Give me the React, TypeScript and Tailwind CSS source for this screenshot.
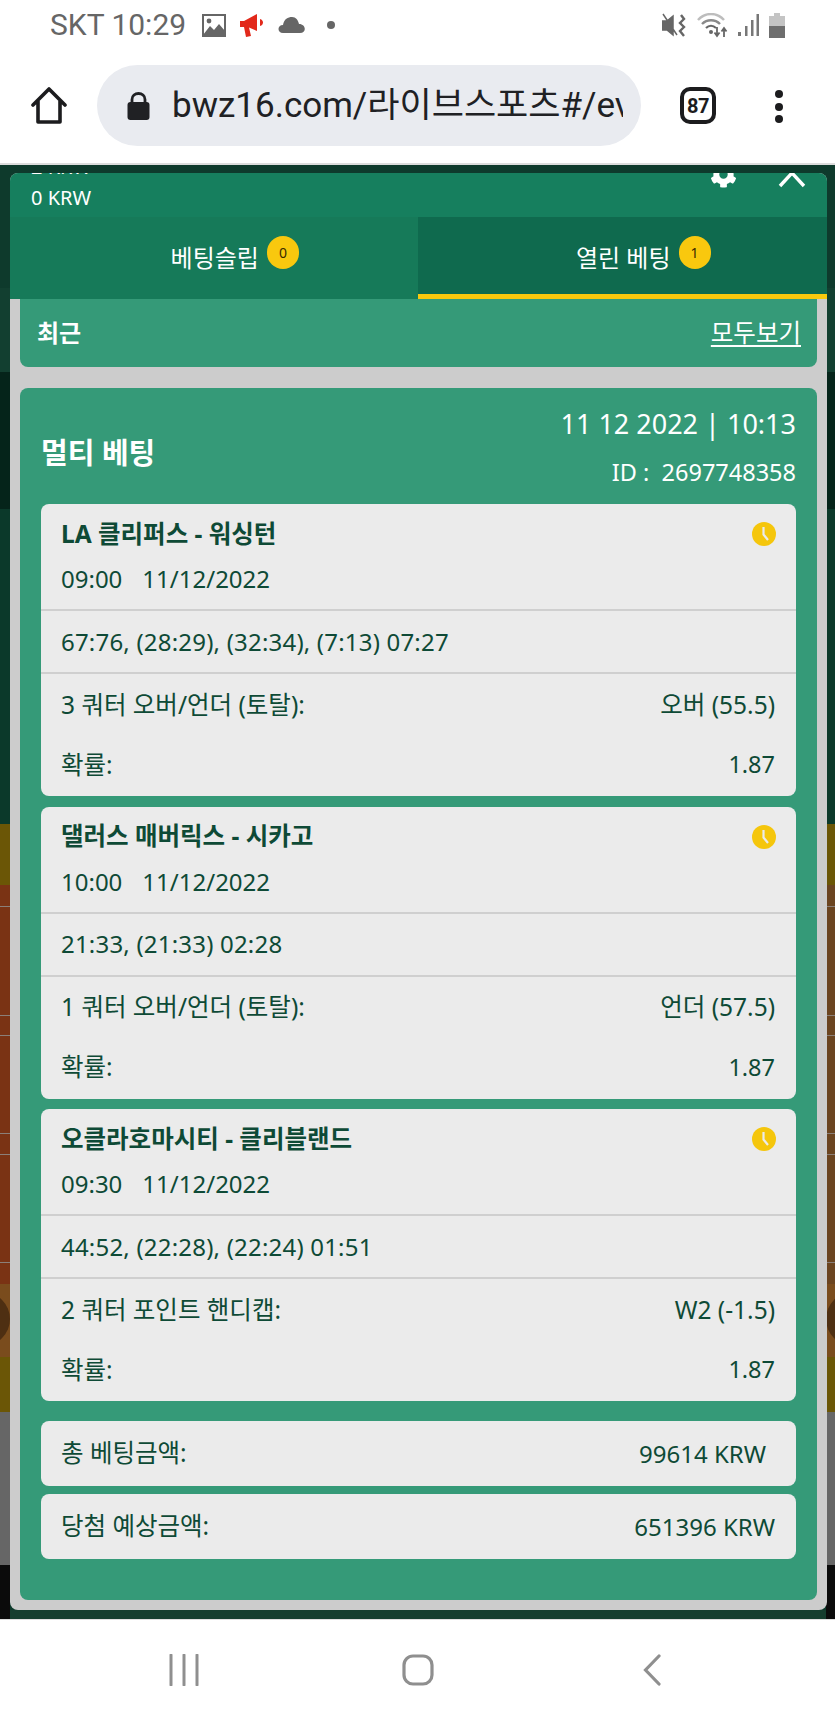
import { FaCog } from 'react-icons/fa';

const bets = [
  {
    teams: 'LA 클리퍼스 - 워싱턴',
    time: '09:00',
    score: '67:76, (28:29), (32:34), (7:13) 07:27',
    market: '3 쿼터 오버/언더 (토탈):',
    pick: '오버 (55.5)'
  },
  {
    teams: '댈러스 매버릭스 - 시카고',
    time: '10:00',
    score: '21:33, (21:33) 02:28',
    market: '1 쿼터 오버/언더 (토탈):',
    pick: '언더 (57.5)'
  },
  {
    teams: '오클라호마시티 - 클리블랜드',
    time: '09:30',
    score: '44:52, (22:28), (22:24) 01:51',
    market: '2 쿼터 포인트 핸디캡:',
    pick: 'W2 (-1.5)'
  }
];

const StatusBar = () => (
  <div className="flex h-[50px] items-center pl-[50px] pr-[50px] text-[#666666]">
    <span className="w-[152px] font-['Roboto',sans-serif] text-[30px] leading-none">SKT 10:29</span>
    <svg width="24" height="23" viewBox="0 0 24 23">
      <rect x="1" y="1" width="22" height="21" fill="none" stroke="#666" strokeWidth="2" />
      <path d="M1 21 L8 12 L12 16 L17 10 L23 17 V22 H1 Z" fill="#666" />
      <circle cx="7" cy="7" r="2.4" fill="#666" />
    </svg>
    <svg className="ml-[14px]" width="26" height="24" viewBox="0 0 26 24">
      <path d="M0 8 L4 8 L17 1 V18 L9 14.5 L11 23 L6 24 L4 14 H0 Z" fill="#e2291b" />
      <path d="M20 6 C24 7 24 12 20 13 Z" fill="#e2291b" />
    </svg>
    <svg className="ml-[12px]" width="27" height="18" viewBox="0 0 27 18">
      <path d="M5 17 C-1 17 -1 9 5 9 C6 3 10 1 14 1 C18 1 20 4 21 8 C28 8 29 17 22 17 Z" fill="#666" />
    </svg>
    <span className="ml-[22px] h-[8px] w-[8px] rounded-full bg-[#666666]" />
    <div className="ml-auto flex items-center">
      <svg width="25" height="25" viewBox="0 0 25 25">
        <path d="M0 8 H5 L11 3 V22 L5 17 H0 Z M1 1 L15 22" fill="#666" stroke="#666" strokeWidth="1.5" />
        <path d="M19 2 L22 6 L18 10 L22 14 L18 18 L22 23" fill="none" stroke="#666" strokeWidth="2.4" />
      </svg>
      <svg className="ml-[10px]" width="31" height="25" viewBox="0 0 31 25">
        <path d="M1 7 C8 -1 20 -1 27 7" fill="none" stroke="#bdbdbd" strokeWidth="2.4" />
        <path d="M5 11 C10 6 18 6 23 11" fill="none" stroke="#8a8a8a" strokeWidth="2.4" />
        <path d="M9 15 C12 12 16 12 19 15" fill="none" stroke="#666" strokeWidth="2.2" />
        <circle cx="14" cy="19" r="2" fill="#666" />
        <path d="M20 14 V22 M17.5 19.5 L20 23 L22.5 19.5 M27 24 V16 M24.5 18.5 L27 15 L29.5 18.5" fill="none" stroke="#666" strokeWidth="1.8" />
      </svg>
      <svg className="ml-[9px]" width="22" height="24" viewBox="0 0 22 24">
        <rect x="1" y="19" width="3" height="4" fill="#777" />
        <rect x="8" y="13" width="2.5" height="10" fill="#777" />
        <rect x="14" y="7" width="2.5" height="16" fill="#777" />
        <rect x="19.5" y="1" width="2.5" height="22" fill="#777" />
      </svg>
      <svg className="ml-[10px]" width="16" height="25" viewBox="0 0 16 25">
        <path d="M5 0 H11 V3 H16 V13 H0 V3 H5 Z" fill="#c4c4c4" />
        <path d="M0 13 H16 V25 H0 Z" fill="#6e6e6e" />
      </svg>
    </div>
  </div>
);

const BrowserBar = () => (
  <div className="flex h-[113px] items-start pl-[31px] pt-[15px]">
    <svg className="mt-[22px]" width="36" height="38" viewBox="0 0 36 38">
      <path d="M2 18 L18 2 L34 18 M7 14 V35 H29 V14" fill="none" stroke="#1c1c1e" strokeWidth="3.6" strokeLinejoin="round" strokeLinecap="round" />
    </svg>
    <div className="ml-[30px] flex h-[81px] w-[544px] items-center overflow-hidden rounded-full bg-[#e9ebf0] pl-[30px] pr-[18px]">
      <svg className="shrink-0" width="23" height="28" viewBox="0 0 23 28">
        <path d="M5 12 V7.5 C5 3.5 8 1.5 11.5 1.5 C15 1.5 18 3.5 18 7.5 V12" fill="none" stroke="#202124" strokeWidth="2.8" />
        <rect x="0.5" y="10" width="22" height="18" rx="3" fill="#202124" />
      </svg>
      <div className="ml-[22px] overflow-hidden whitespace-nowrap font-['Roboto','Noto_Sans_CJK_KR',sans-serif] text-[35px] leading-none text-[#202124]">
        bwz16.com/라이브스포츠#/ev
      </div>
    </div>
    <div className="ml-[39px] mt-[22px] flex h-[37px] w-[36px] items-center justify-center rounded-[10px] border-[4px] border-[#1c1c1e] font-['Roboto',sans-serif] text-[20px] font-bold tracking-[-0.5px] text-[#1c1c1e]">
      87
    </div>
    <div className="ml-[59px] mt-[25px] flex flex-col gap-[4.5px]">
      <span className="h-[8px] w-[8px] rounded-full bg-[#1c1c1e]" />
      <span className="h-[8px] w-[8px] rounded-full bg-[#1c1c1e]" />
      <span className="h-[8px] w-[8px] rounded-full bg-[#1c1c1e]" />
    </div>
  </div>
);

// page behind the modal, only its edges stay visible
const Backdrop = ({ cell, blob }: { cell: string; blob: string }) => (
  <div className="flex h-full flex-1 flex-col overflow-hidden">
    <div className="h-[123px] shrink-0 bg-[#0e3a2c]" />
    <div className="h-[84px] shrink-0 bg-[#123f30]" />
    <div className="h-[137px] shrink-0 bg-[#05241a]" />
    <div className="h-[315px] shrink-0 bg-[#0b392a]" />
    <div className="h-[61px] shrink-0 bg-[#6b5606]" />
    <div className={`h-[399px] shrink-0 ${cell}`}>
      <div className="h-[22px] border-b border-[#8b7f78]" />
      <div className="h-[109px] border-b border-[#8b7f78]" />
      <div className="h-[20px] border-b border-[#8b7f78]" />
      <div className="h-[98px] border-b border-[#8b7f78]" />
      <div className="h-[21px] border-b border-[#8b7f78]" />
      <div className="h-[108px] border-b border-[#8b7f78]" />
    </div>
    <div className="h-[73px] shrink-0 bg-[#7a4c1d] pt-[8px]">
      <div className={`h-[54px] w-[54px] rounded-full bg-[#4e2f12] ${blob}`} />
    </div>
    <div className="h-[55px] shrink-0 bg-[#6b5606]" />
    <div className="h-[153px] shrink-0 bg-[#666666]" />
    <div className="h-[54px] shrink-0 bg-[#0b0b0b]" />
  </div>
);

const ClockIcon = () => (
  <svg width="24" height="24" viewBox="0 0 24 24">
    <circle cx="12" cy="12" r="12" fill="#f5c60c" />
    <path d="M11.5 5 V12.5 L16 18" fill="none" stroke="#ebebeb" strokeWidth="2.2" />
  </svg>
);

const BetCard = ({ bet }: { bet: (typeof bets)[number] }) => (
  <div className="h-[292px] rounded-[8px] bg-[#ebebeb] text-[#0e4a36]">
    <div className="h-[107px] border-b-2 border-[#cfcfcf] px-[20px]">
      <div className="flex h-[60px] items-center justify-between">
        <span className="text-[24.5px] font-bold leading-none">{bet.teams}</span>
        <ClockIcon />
      </div>
      <div className="-mt-[3px] flex gap-[20px] text-[24px] leading-[36px]">
        <span>{bet.time}</span>
        <span>11/12/2022</span>
      </div>
    </div>
    <div className="flex h-[63px] items-center border-b-2 border-[#cfcfcf] px-[20px] text-[24px] tracking-[0.2px]">
      {bet.score}
    </div>
    <div className="flex h-[60px] items-center justify-between pl-[20px] pr-[21px] pt-[2px] text-[24.5px]">
      <span>{bet.market}</span>
      <span>{bet.pick}</span>
    </div>
    <div className="flex h-[60px] items-center justify-between pl-[20px] pr-[21px] pt-[2px]">
      <span className="text-[24.5px]">확률:</span>
      <span className="text-[23.5px]">1.87</span>
    </div>
  </div>
);

const Badge = ({ n }: { n: number }) => (
  <span className="absolute left-full top-[-10px] ml-[8px] flex h-[33px] w-[32px] items-center justify-center rounded-full bg-[#f9c80e] text-[14px] text-[#3a2a00]">
    {n}
  </span>
);

const Modal = () => (
  <div className="absolute left-[10px] right-[8px] top-[8px] flex h-[1437px] flex-col overflow-hidden rounded-[8px] bg-[#cccccc]">
    <div className="relative h-[44px] shrink-0 overflow-hidden bg-[#167f5e] pl-[21px] text-[20px] leading-[31px] text-white">
      <div className="-mt-[22px]">2 KRW</div>
      <div>0 KRW</div>
      <FaCog className="absolute left-[700px] top-[-12px] text-[27px]" />
      <svg className="absolute left-[768px] top-[-15px]" width="28" height="30" viewBox="0 0 28 30">
        <path d="M2 2 L26 28 M26 2 L2 28" fill="none" stroke="white" strokeWidth="3.4" />
      </svg>
    </div>
    <div className="flex h-[82px] shrink-0 text-[24px] text-white">
      <div className="flex flex-1 items-center justify-center bg-[#167a59]">
        <span className="relative ml-[2px] leading-none">
          베팅슬립
          <Badge n={0} />
        </span>
      </div>
      <div className="flex flex-1 items-center justify-center border-b-[5px] border-[#f9c80e] bg-[#0f6a4e] pl-[2px]">
        <span className="relative mt-[5px] leading-none">
          열린 베팅
          <Badge n={1} />
        </span>
      </div>
    </div>
    <div className="flex flex-1 flex-col px-[10px]">
      <div className="flex h-[68px] shrink-0 items-center justify-between rounded-b-[8px] bg-[#359a78] pl-[17px] pr-[16px] text-white">
        <span className="text-[24px] font-bold">최근</span>
        <span className="text-[24.5px] underline underline-offset-[3px]">모두보기</span>
      </div>
      <div className="mt-[21px] h-[1212px] rounded-[8px] bg-[#359a78] px-[21px]">
        <div className="flex h-[116px] items-center justify-between pt-[2px] text-white">
          <span className="mt-[11px] text-[29px] font-bold">멀티 베팅</span>
          <div className="text-right">
            <div className="text-[27px] leading-[38px]">11 12 2022 | 10:13</div>
            <div className="mt-[11px] text-[23.5px] leading-[36px]">ID :&nbsp;&nbsp;2697748358</div>
          </div>
        </div>
        <div className="flex flex-col gap-[10.5px]">
          {bets.map((bet) => (
            <BetCard key={bet.teams} bet={bet} />
          ))}
        </div>
        <div className="mt-[20px] flex flex-col gap-[8px] text-[#0e4a36]">
          <div className="flex h-[65px] items-center justify-between rounded-[8px] bg-[#ebebeb] pl-[20px] pr-[30px]">
            <span className="text-[24.5px]">총 베팅금액:</span>
            <span className="text-[24px]">99614 KRW</span>
          </div>
          <div className="flex h-[65px] items-center justify-between rounded-[8px] bg-[#ebebeb] pl-[20px] pr-[21px]">
            <span className="text-[24.5px]">당첨 예상금액:</span>
            <span className="text-[24px]">651396 KRW</span>
          </div>
        </div>
      </div>
    </div>
  </div>
);

const NavBar = () => (
  <div className="flex h-[98px] items-start border-t border-[#dddddd] pt-[34px]">
    <svg className="ml-[169px]" width="30" height="32" viewBox="0 0 30 32">
      <path d="M2 1 V31 M15 1 V31 M28 1 V31" fill="none" stroke="#8f8f8f" strokeWidth="3" strokeLinecap="round" />
    </svg>
    <svg className="ml-[203px]" width="32" height="32" viewBox="0 0 32 32">
      <rect x="2" y="2" width="28" height="28" rx="9" fill="none" stroke="#8f8f8f" strokeWidth="3.2" />
    </svg>
    <svg className="ml-[209px]" width="18" height="32" viewBox="0 0 18 32">
      <path d="M16 2 L2.5 16 L16 30" fill="none" stroke="#8f8f8f" strokeWidth="3.2" strokeLinecap="round" />
    </svg>
  </div>
);

const App = () => {
  return (
    <div className="flex h-[1717px] w-[835px] flex-col overflow-hidden bg-white font-['Noto_Sans','Noto_Sans_CJK_KR',sans-serif]">
      <StatusBar />
      <BrowserBar />
      <main className="relative flex h-[1456px] shrink-0 border-t-2 border-[#dcdcdc]">
        <div className="flex w-[10px]">
          <Backdrop cell="bg-[#7a3314]" blob="-ml-[44px]" />
        </div>
        <div className="flex flex-1 flex-col justify-end bg-[#0e3a2c]">
          <div className="h-[9px] bg-[#153d2e]" />
        </div>
        <div className="flex w-[9px]">
          <Backdrop cell="bg-[#6b4420]" blob="ml-0" />
        </div>
        <Modal />
      </main>
      <NavBar />
    </div>
  );
};

export default App;
